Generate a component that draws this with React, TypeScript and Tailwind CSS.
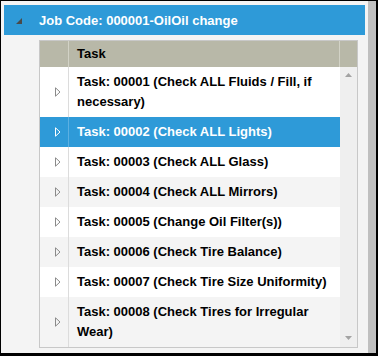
import React from 'react';

const tasks = [
  { id: '00001', label: 'Check ALL Fluids / Fill, if necessary' },
  { id: '00002', label: 'Check ALL Lights' },
  { id: '00003', label: 'Check ALL Glass' },
  { id: '00004', label: 'Check ALL Mirrors' },
  { id: '00005', label: 'Change Oil Filter(s)' },
  { id: '00006', label: 'Check Tire Balance' },
  { id: '00007', label: 'Check Tire Size Uniformity' },
  { id: '00008', label: 'Check Tires for Irregular Wear' },
];

function ExpandArrow({ active }: { active: boolean }) {
  return (
    <svg width="6" height="10" viewBox="0 0 6 10" className="block">
      <path d="M0.5 0.8 L5 5 L0.5 9.2 Z" fill="none" stroke={active ? '#ffffff' : '#8a8a8a'} strokeWidth="1" />
    </svg>
  );
}

export default function App() {
  const selected = '00002';

  return (
    <div
      className="w-[378px] h-[356px] flex border-t border-l border-r-2 border-b-[3px] border-black bg-[#f4f4f4]"
      style={{ fontFamily: '"Liberation Sans", Arial, sans-serif' }}
    >
      <div className="flex-1 flex flex-col pl-[3px] pr-[3px] pt-[4px]">
        {/* accordion header */}
        <div className="h-[30px] bg-[#2e9ad8] flex items-center">
          <div className="w-[35px] pl-[12px] pt-[1px]">
            <svg width="6" height="6" viewBox="0 0 6 6" className="block">
              <path d="M6 0 L6 6 L0 6 Z" fill="#4a4a4a" />
            </svg>
          </div>
          <span className="text-[13px] font-bold text-white leading-none">Job Code: 000001-OilOil change</span>
        </div>

        {/* grid */}
        <div className="ml-[35px] mt-[5px] w-[319px] h-[308px] border border-[#c8c8c8] flex flex-col overflow-hidden">
          <div className="h-[26px] flex bg-[#b8b8a8] text-[13px] font-bold text-black">
            <div className="w-[29px] border-r border-[#d2d2c6]" />
            <div className="w-[271px] border-r border-[#d2d2c6] pl-[8px] flex items-center">Task</div>
            <div className="w-[17px]" />
          </div>
          <div className="flex-1 flex min-h-0">
            <div className="w-[300px] flex flex-col">
              {tasks.map((t, i) => {
                const active = t.id === selected;
                const bg = active ? 'bg-[#2e9ad8] text-white' : i % 2 === 1 ? 'bg-[#f4f4f4] text-black' : 'bg-white text-black';
                return (
                  <div key={t.id} className={`flex ${bg}`}>
                    <div
                      className={`w-[29px] shrink-0 border-r flex items-center pl-[15px] ${
                        active ? 'border-[#5cb0e2]' : 'border-[#dcdcdc]'
                      }`}
                    >
                      <ExpandArrow active={active} />
                    </div>
                    <div className="flex-1 pl-[8px] pr-[6px] py-[5px] text-[13px] font-bold leading-[20px]">
                      {`Task: ${t.id} (${t.label})`}
                    </div>
                  </div>
                );
              })}
            </div>
            <div className="w-[17px] bg-[#efefef] flex flex-col justify-between items-center pt-[6px] pb-[7px]">
              <svg width="7" height="4" viewBox="0 0 7 4" className="block">
                <path d="M3.5 0 L7 4 L0 4 Z" fill="#a3a3a3" />
              </svg>
              <svg width="7" height="4" viewBox="0 0 7 4" className="block">
                <path d="M0 0 L7 0 L3.5 4 Z" fill="#a3a3a3" />
              </svg>
            </div>
          </div>
        </div>
      </div>
      <div className="w-[8px] bg-[#c0c0c0]" />
    </div>
  );
}
